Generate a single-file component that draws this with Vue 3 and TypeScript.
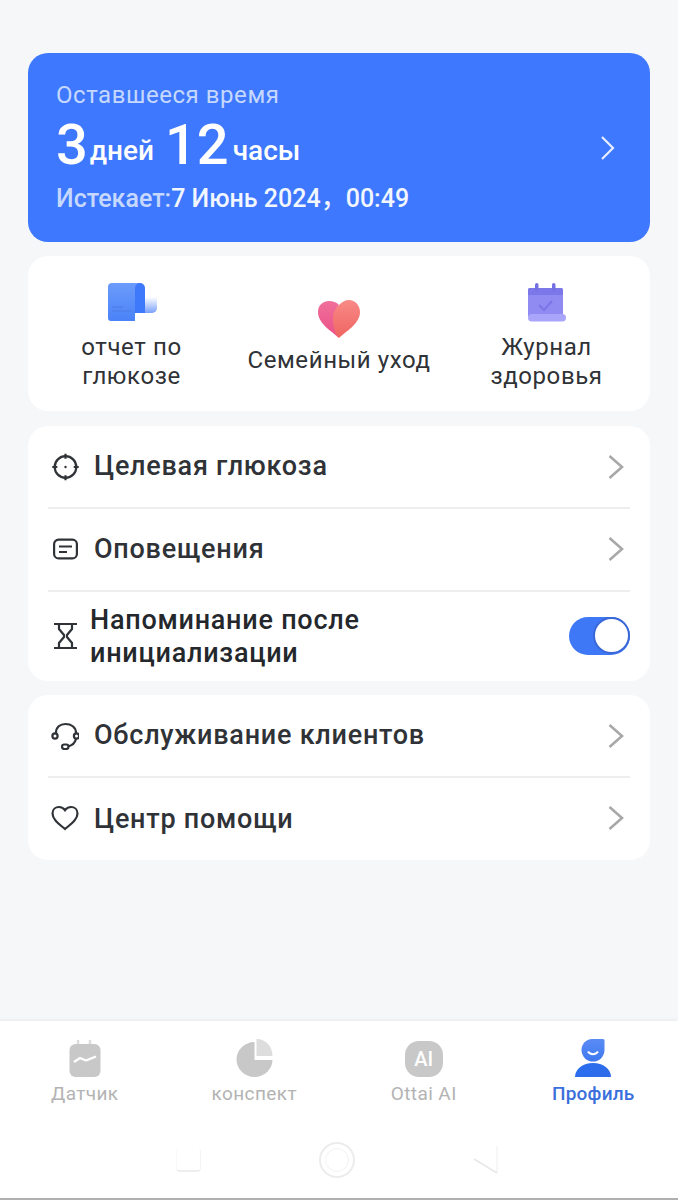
<template>
  <div class="page">
    <main class="content">
      <section class="time-card">
        <div class="time-info">
          <div class="time-label">Оставшееся время</div>
          <div class="time-value">
            <span class="num">3</span><span class="unit unit-first">дней</span>
            <span class="num num-second">12</span><span class="unit">часы</span>
          </div>
          <div class="time-expire">Истекает:<span class="expire-date">7 Июнь 2024，00:49</span></div>
        </div>
        <svg class="time-arrow" width="16" height="26" viewBox="0 0 16 26">
          <path d="M2 2l11 11L2 24" fill="none" stroke="#e6eeff" stroke-width="2.2" />
        </svg>
      </section>

      <section class="card shortcuts">
        <div class="shortcut">
          <svg class="shortcut-icon" width="50" height="40" viewBox="0 0 50 40">
            <defs>
              <linearGradient id="roll" x1="0" y1="0" x2="0" y2="1">
                <stop offset="0" stop-color="#ffffff" />
                <stop offset="1" stop-color="#7aa0fb" />
              </linearGradient>
              <linearGradient id="sheet" x1="0" y1="0" x2="0" y2="1">
                <stop offset="0" stop-color="#6c9bfb" />
                <stop offset="1" stop-color="#4a82f7" />
              </linearGradient>
            </defs>
            <path d="M38 15h12v11a5 5 0 0 1-5 5h-7z" fill="url(#roll)" />
            <path d="M5 1h28v38H4a3 3 0 0 1-3-3V5a4 4 0 0 1 4-4z" fill="url(#sheet)" />
            <path d="M33 39H28V6a5 5 0 0 1 5-5 5 5 0 0 1 5 5v25H28v8z" fill="#3e78fb" />
            <path d="M28 31h10v8H28z" fill="#fff" />
            <path d="M5 25h11M5 29h20" stroke="#4f80ea" stroke-width="1.5" />
          </svg>
          <span class="shortcut-text">отчет по<br />глюкозе</span>
        </div>
        <div class="shortcut">
          <svg class="shortcut-icon heart-icon" width="42" height="38" viewBox="0 0 42 38">
            <defs>
              <linearGradient id="heartl" x1="0" y1="0" x2="0" y2="1">
                <stop offset="0" stop-color="#f0709a" />
                <stop offset="1" stop-color="#ea4f88" />
              </linearGradient>
              <linearGradient id="heartr" x1="0" y1="0" x2="0" y2="1">
                <stop offset="0" stop-color="#f98a86" />
                <stop offset="1" stop-color="#ef6461" />
              </linearGradient>
            </defs>
            <path d="M21 38C12 30 0 23 0 12 0 5 5 1 11 1c4 0 7 1 10 4 0 0-5 5-5 14 0 9 5 19 5 19z" fill="url(#heartl)" />
            <path d="M21 38c-4-4-6-11-6-19S18 8 21 5c3-3 6-5 10-5 6 0 11 5 11 12 0 11-12 18-21 26z" fill="url(#heartr)" />
          </svg>
          <span class="shortcut-text">Семейный уход</span>
        </div>
        <div class="shortcut">
          <svg class="shortcut-icon" width="40" height="40" viewBox="0 0 40 40">
            <path d="M1 8a2 2 0 0 1 2-2h31a2 2 0 0 1 2 2v26H1z" fill="#8f8bf2" />
            <path d="M1 8a2 2 0 0 1 2-2h31a2 2 0 0 1 2 2v5H1z" fill="#7d78ea" />
            <rect x="8" y="1" width="3.500" height="8" rx="1.750" fill="#7470e4" />
            <rect x="25" y="1" width="3.500" height="8" rx="1.750" fill="#7470e4" />
            <path d="M12 23l5 5 8-9" fill="none" stroke="#7b76e6" stroke-width="2.200" />
            <rect x="1" y="32" width="38" height="7.500" rx="3.750" fill="#a9a5fa" />
          </svg>
          <span class="shortcut-text">Журнал<br />здоровья</span>
        </div>
      </section>

      <section class="card list">
        <div class="row row-first">
          <svg class="row-icon" width="28" height="28" viewBox="0 0 28 28" fill="none" stroke="#2f3236" stroke-width="2.2">
            <circle cx="14.500" cy="14" r="10.800" />
            <path d="M14.500 0.800v5M14.500 22.200v5M1.300 14h5M22.700 14h5" />
            <circle cx="14.500" cy="14" r="1.200" fill="#2f3236" stroke="none" />
          </svg>
          <span class="row-text">Целевая глюкоза</span>
          <svg class="row-arrow" width="16" height="26" viewBox="0 0 16 26"><path d="M1.500 2l12.500 11L1.500 24" /></svg>
        </div>
        <div class="row row-second">
          <svg class="row-icon" width="28" height="28" viewBox="0 0 28 28" fill="none" stroke="#2f3236" stroke-width="2.2">
            <rect x="3.100" y="4.600" width="22.800" height="18.800" rx="4.500" />
            <path d="M8 11.500h13M8 17h8" />
          </svg>
          <span class="row-text">Оповещения</span>
          <svg class="row-arrow" width="16" height="26" viewBox="0 0 16 26"><path d="M1.500 2l12.500 11L1.500 24" /></svg>
        </div>
        <div class="row row-switch">
          <svg class="row-icon" width="28" height="28" viewBox="0 0 28 28" fill="none" stroke="#2f3236" stroke-width="2.2">
            <path d="M3 2h23M3 26h23M8 2v5l5 6v2l-5 6v5M21 2v5l-5 6v2l5 6v5" />
          </svg>
          <span class="row-text row-text-long">Напоминание после инициализации</span>
          <div class="switch"><div class="switch-knob"></div></div>
        </div>
      </section>

      <section class="card list">
        <div class="row row-first">
          <svg class="row-icon" width="28" height="28" viewBox="0 0 28 28" fill="none" stroke="#2f3236" stroke-width="2.2">
            <path d="M5 11C5 5 9 2 14.500 2S25 5 25 11" />
            <circle cx="4" cy="14" r="2.600" />
            <circle cx="25.500" cy="14" r="2.600" />
            <path d="M25 17c-1 4-4 6.500-8 7.500" />
            <rect x="11" y="22.500" width="6.500" height="4.500" rx="2.250" />
          </svg>
          <span class="row-text">Обслуживание клиентов</span>
          <svg class="row-arrow" width="16" height="26" viewBox="0 0 16 26"><path d="M1.500 2l12.500 11L1.500 24" /></svg>
        </div>
        <div class="row row-help">
          <svg class="row-icon" width="28" height="28" viewBox="0 0 28 28" fill="none" stroke="#2f3236" stroke-width="2.2">
            <path d="M14 25C8 20 1.500 15.500 1.500 9.500 1.500 5.500 4.500 3 8 3c2.500 0 4.500 1 6 3.200C15.500 4 17.500 3 20 3c3.500 0 6.500 2.500 6.500 6.500 0 6-6.500 10.500-12.500 15.500z" />
          </svg>
          <span class="row-text">Центр помощи</span>
          <svg class="row-arrow" width="16" height="26" viewBox="0 0 16 26"><path d="M1.500 2l12.500 11L1.500 24" /></svg>
        </div>
      </section>
    </main>

    <nav class="tabbar">
      <div class="tabs">
        <div class="tab">
          <svg width="32" height="38" viewBox="0 0 32 38">
            <path d="M9 1v6M21 1v6" stroke="#dcdcdc" stroke-width="2.500" />
            <rect x="0.500" y="5" width="31" height="33" rx="6" fill="#c8c8c8" />
            <path d="M5 23l6-4 6 2.500 10-4" fill="none" stroke="#fff" stroke-width="2.400" />
          </svg>
          <span>Датчик</span>
        </div>
        <div class="tab">
          <svg width="38" height="38" viewBox="-0.500 0 38 38">
            <path d="M19 3v18h18c0 9-8 17-18 17C9 38 1 30 1 20.500 1 11 9 3 19 3z" fill="#c8c8c8" />
            <path d="M21 0c9 0 16 7 16 17H21z" fill="#dddddd" />
          </svg>
          <span>конспект</span>
        </div>
        <div class="tab">
          <div class="ai-icon">AI</div>
          <span>Ottai AI</span>
        </div>
        <div class="tab tab-active">
          <svg width="38" height="38" viewBox="0 0 38 38">
            <defs>
              <linearGradient id="head" x1="0" y1="0" x2="0" y2="1">
                <stop offset="0" stop-color="#5b8cf5" />
                <stop offset="1" stop-color="#3e78f0" />
              </linearGradient>
              <linearGradient id="body" x1="0" y1="0" x2="1" y2="0">
                <stop offset="0" stop-color="#2a6ef0" />
                <stop offset="1" stop-color="#2f6be8" />
              </linearGradient>
            </defs>
            <path d="M18 0h11a1.500 1.500 0 0 1 1.500 1.500V11a11.500 11.500 0 0 1-23 0C7.500 5 12 0 18 0z" fill="url(#head)" />
            <path d="M14 12.500c2 3.500 8 3.500 10 0" fill="none" stroke="#fff" stroke-width="2" />
            <path d="M1 38c0-8 8-14 18-14s18 6 18 14z" fill="url(#body)" />
          </svg>
          <span>Профиль</span>
        </div>
      </div>
      <div class="sys-bar">
        <div class="sys-square"></div>
        <div class="sys-circle"><div class="sys-circle-inner"></div></div>
        <svg class="sys-back" width="26" height="30" viewBox="0 0 26 30" fill="none" stroke-width="1.500">
          <path d="M24 1v27" stroke="#f5f5f5" />
          <path d="M24 28L1 14" stroke="#e8e8e8" />
        </svg>
      </div>
    </nav>
  </div>
</template>

<script setup lang="ts">
</script>

<style>
html,
body {
  margin: 0;
  background: #f5f7f9;
}
</style>

<style scoped>
.page {
  width: 678px;
  height: 1200px;
  display: flex;
  flex-direction: column;
  background: #f5f7f9;
  font-family: Roboto, "Noto Sans CJK SC", sans-serif;
  color: #2f3236;
  overflow: hidden;
}

.content {
  flex: 1;
  padding: 53px 28px 0;
  display: flex;
  flex-direction: column;
  gap: 14px;
}

.time-card {
  height: 189px;
  box-sizing: border-box;
  padding: 28px 34px 0 28px;
  border-radius: 20px;
  background: #3e78fe;
  color: #fff;
  display: flex;
  align-items: flex-start;
  justify-content: space-between;
}

.time-label {
  font-size: 24px;
  line-height: 28px;
  color: #c6d8ff;
  letter-spacing: 0.55px;
}

.time-value {
  margin-top: 8px;
  height: 57px;
  line-height: 57px;
  font-weight: 500;
}

.num {
  font-size: 56px;
}

.num-second {
  margin-left: 11px;
}

.unit {
  font-size: 28px;
  margin-left: 4px;
  vertical-align: 4px;
}

.unit-first {
  margin-left: 2px;
}

.time-expire {
  margin-top: 10px;
  font-size: 25px;
  line-height: 30px;
  font-weight: 500;
  color: #c6d8ff;
}

.expire-date {
  color: #f2f6ff;
}

.time-arrow {
  margin-top: 54px;
}

.card {
  background: #fff;
  border-radius: 20px;
}

.shortcuts {
  height: 155px;
  margin-bottom: 1px;
  display: grid;
  grid-template-columns: 207px 208px 207px;
}

.shortcut {
  display: flex;
  flex-direction: column;
  align-items: center;
  justify-content: center;
  padding-top: 5px;
  box-sizing: border-box;
  text-align: center;
  font-size: 24px;
  line-height: 29px;
  letter-spacing: 0.6px;
}

.shortcut-icon {
  margin-bottom: 11px;
}

.heart-icon {
  margin-top: 3px;
  margin-bottom: 8px;
}

.row {
  position: relative;
  display: flex;
  align-items: center;
  padding: 0 26px 0 23px;
}

.list .row + .row::before {
  content: "";
  position: absolute;
  top: 0;
  left: 20px;
  right: 20px;
  height: 2px;
  background: #edeef0;
}

.row-first {
  height: 81px;
}

.row-second {
  height: 83px;
}

.row-help {
  height: 84px;
}

.row-switch {
  height: 91px;
  padding-right: 20px;
}

.row-icon {
  flex-shrink: 0;
  margin-right: 15px;
}

.row-text {
  flex: 1;
  font-size: 27px;
  font-weight: 500;
  letter-spacing: 0.75px;
}

.row-first .row-text {
  margin-bottom: 2px;
}

.row-help .row-text {
  margin-top: 2px;
}

.row-text-long {
  margin-left: -4px;
  margin-top: 2px;
  max-width: 300px;
  line-height: 33px;
  color: #24272b;
}

.row-arrow {
  flex-shrink: 0;
}

.row-arrow path {
  fill: none;
  stroke: #a8a8a8;
  stroke-width: 2.6;
}

.switch {
  width: 61px;
  height: 38px;
  margin-left: auto;
  border-radius: 19px;
  background: #3e78f6;
  display: flex;
  justify-content: flex-end;
  align-items: center;
}

.switch-knob {
  width: 33px;
  height: 33px;
  border-radius: 50%;
  background: #fff;
  border: 2px solid #3a68d8;
}

.tabbar {
  height: 179px;
  background: #fff;
  border-bottom: 2px solid #b0b0b0;
  box-sizing: border-box;
  box-shadow: 0 -2px 2px #eceef1;
}

.tabs {
  height: 88px;
  padding-top: 18px;
  display: grid;
  grid-template-columns: repeat(4, 1fr);
}

.tab {
  display: flex;
  flex-direction: column;
  align-items: center;
  gap: 5px;
  font-size: 19px;
  line-height: 24px;
  letter-spacing: 0.4px;
  color: #b3b3b3;
}

.tab svg {
  height: 38px;
}

.ai-icon {
  width: 38px;
  height: 36px;
  margin-top: 2px;
  border-radius: 14px;
  background: #c8c8c8;
  color: #fff;
  font-size: 20px;
  line-height: 36px;
  font-weight: 500;
  text-align: center;
  letter-spacing: 0;
}

.tab-active {
  color: #3a6fdc;
  font-weight: 500;
  letter-spacing: 0.2px;
}

.sys-bar {
  height: 56px;
  padding: 10px 4px 0 0;
  box-sizing: border-box;
  display: flex;
  justify-content: center;
  align-items: center;
  gap: 118px;
}

.sys-square {
  width: 23px;
  height: 21px;
  border: 1px solid transparent;
  border-bottom: 2px solid #eeeeee;
  border-right-color: #f4f4f4;
  border-left-color: #f8f8f8;
  border-radius: 4px;
}

.sys-circle {
  width: 32px;
  height: 32px;
  border: 2px solid #ececec;
  border-radius: 50%;
  display: flex;
  align-items: center;
  justify-content: center;
}

.sys-circle-inner {
  width: 22px;
  height: 22px;
  border: 1px solid #f2f2f2;
  border-radius: 50%;
}
</style>
